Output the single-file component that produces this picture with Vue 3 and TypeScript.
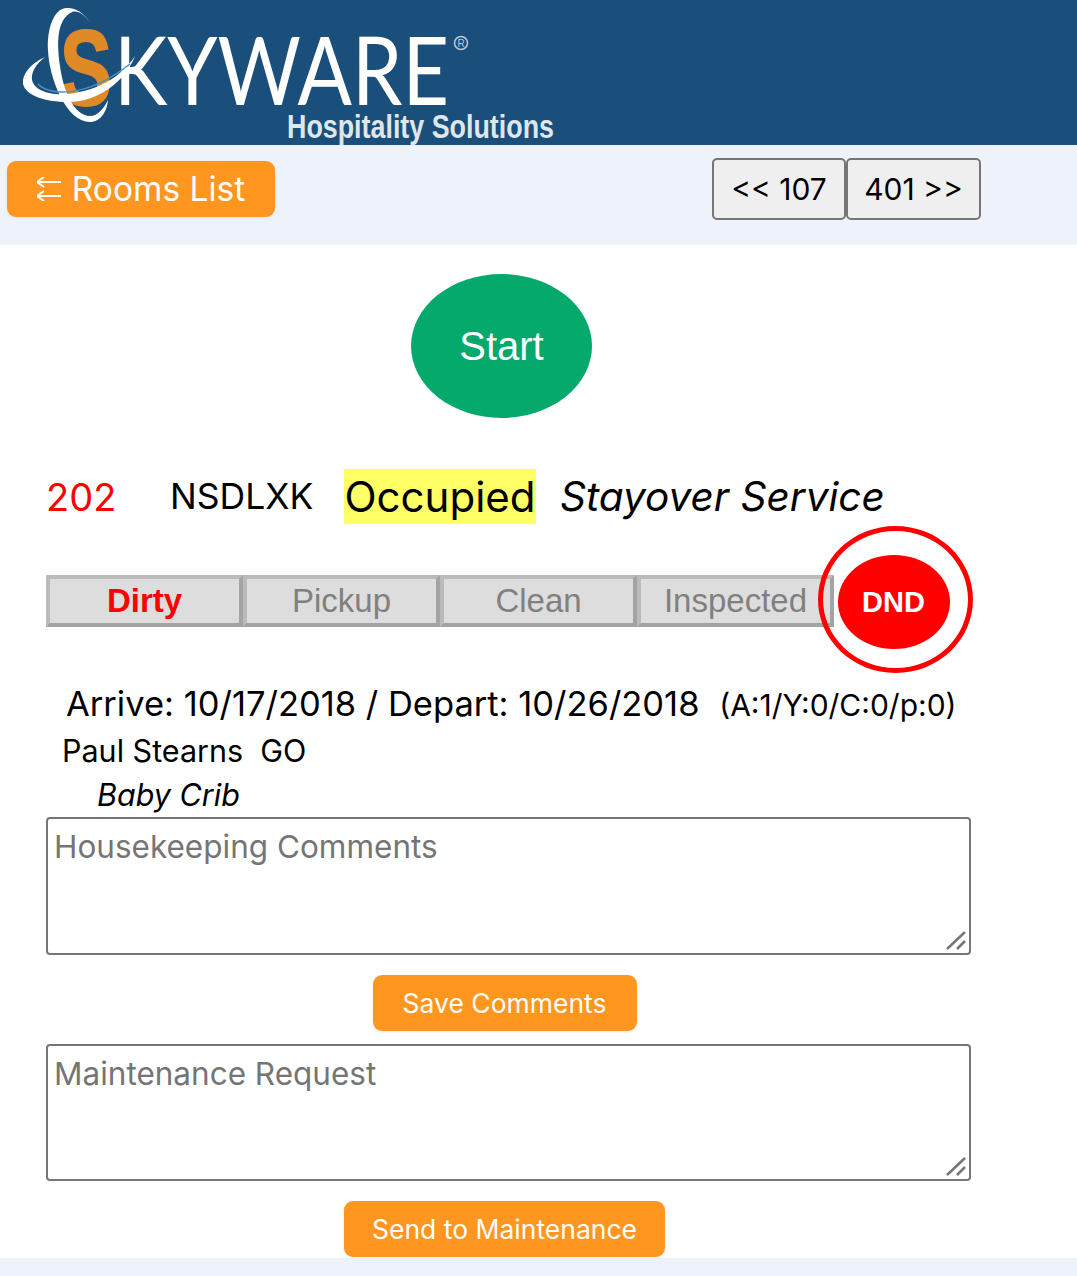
<template>
  <div class="page">
    <header class="brand">
      <!-- logo -->
      <svg class="logo" width="580" height="145" viewBox="0 0 580 145" aria-label="Skyware Hospitality Solutions">
        <text x="60" y="105" class="logo-s" textLength="52" lengthAdjust="spacingAndGlyphs">S</text>
        <text x="114" y="105" class="logo-word" textLength="335" lengthAdjust="spacingAndGlyphs">KYWARE</text>
        <path d="M90 23C84 12 74 7 66 8C54 9 47 28 48 50C49 78 66 122 90 122C100 122 107 112 108 100C104 108 98 116 90 116C74 116 63 90 60 66C57 44 56 20 72 12C78 10 85 15 90 23Z" fill="#fff" />
        <path d="M45 57C30 64 22 74 23 84C26 96 46 102 68 102C96 102 124 84 135 56C122 76 100 90 68 94C50 96 34 90 32 80C31 72 36 64 45 57Z" fill="#fff" />
        <path d="M38 84C48 95 84 100 130 64" fill="none" stroke="#4a90c2" stroke-width="1.5" />
        <circle cx="461" cy="43" r="6.5" fill="none" stroke="#b9c9d8" stroke-width="1.5" />
        <text x="461" y="47" class="logo-r">R</text>
        <text x="287" y="138" class="logo-sub" textLength="267" lengthAdjust="spacingAndGlyphs">Hospitality Solutions</text>
      </svg>
    </header>

    <nav class="toolbar">
      <button class="orange rooms" type="button">
        <svg class="back" width="24" height="24" viewBox="0 0 24 24">
          <path d="M0 5H24M7 0L0 5L7 10M0 19H24M7 14L0 19L7 24" fill="none" stroke="#fff" stroke-width="2" />
        </svg>
        Rooms List
      </button>
      <div class="pager">
        <button type="button">&lt;&lt; 107</button>
        <button type="button">401 &gt;&gt;</button>
      </div>
    </nav>

    <main class="content">
      <div class="start">Start</div>

      <div class="room-line">
        <span class="room-no">202</span>
        <span class="room-code">NSDLXK</span>
        <span class="occupied">Occupied</span>
        <em>Stayover Service</em>
      </div>

      <div class="status-row">
        <div class="status active">Dirty</div>
        <div v-for="s in statuses" :key="s" class="status">{{ s }}</div>
        <div class="dnd"><span>DND</span></div>
      </div>

      <div class="dates">Arrive: 10/17/2018 / Depart: 10/26/2018 <span>(A:1/Y:0/C:0/p:0)</span></div>
      <div class="guest">Paul Stearns&nbsp; GO</div>
      <div class="extra">Baby Crib</div>

      <div class="note">
        <textarea placeholder="Housekeeping Comments"></textarea>
        <svg class="grip" width="20" height="20" viewBox="0 0 20 20"><path d="M1 19L19 2M11 19L19 11" stroke="#767676" stroke-width="2.5" /></svg>
      </div>
      <div class="action"><button class="orange small save" type="button">Save Comments</button></div>

      <div class="note second">
        <textarea placeholder="Maintenance Request"></textarea>
        <svg class="grip" width="20" height="20" viewBox="0 0 20 20"><path d="M1 19L19 2M11 19L19 11" stroke="#767676" stroke-width="2.5" /></svg>
      </div>
      <div class="action"><button class="orange small send" type="button">Send to Maintenance</button></div>
    </main>
  </div>
</template>

<script setup lang="ts">
const statuses: string[] = ['Pickup', 'Clean', 'Inspected']
</script>

<style>
html, body {
  background: #eef2fa;
}
</style>

<style scoped>
.page {
  min-height: 1276px;
  font-family: Inter, "Open Sans", sans-serif;
  color: #000;
}

.brand {
  height: 145px;
  background: #1b4f7b;
  overflow: hidden;
}

.logo {
  display: block;
}

.logo-s {
  font: bold 108px "Liberation Sans", sans-serif;
  fill: #e08a27;
  stroke: #e08a27;
  stroke-width: 2px;
}

.logo-word {
  font: 95px Lato, "Liberation Sans", sans-serif;
  fill: #fff;
}

.logo-r {
  font: 10px "Liberation Sans", sans-serif;
  fill: #b9c9d8;
  text-anchor: middle;
}

.logo-sub {
  font: bold 33px "Liberation Sans", sans-serif;
  fill: #dfe6ec;
}

.toolbar {
  height: 100px;
  box-sizing: border-box;
  display: flex;
  align-items: flex-start;
  padding: 13px 0 0 7px;
}

.orange {
  border: 0;
  border-radius: 9px;
  background: #ff9620;
  color: #fff;
  font-family: Inter, sans-serif;
  box-shadow: 0 1px 3px rgba(0, 0, 0, 0.08);
}

.rooms {
  width: 268px;
  height: 56px;
  margin-top: 3px;
  font-size: 33.5px;
  display: flex;
  align-items: center;
  justify-content: center;
  gap: 11px;
  white-space: nowrap;
}

.pager {
  display: flex;
  margin-left: 437px;
}

.pager button {
  height: 62px;
  box-sizing: border-box;
  border: 2px solid #767676;
  border-radius: 5px;
  background: #efefef;
  color: #000;
  font: 30px Inter, sans-serif;
  padding: 0;
}

.pager button:first-child {
  width: 134px;
}

.pager button:last-child {
  width: 135px;
}

.content {
  background: #fff;
  height: 1013px;
  box-sizing: border-box;
  padding: 29px 0 0 46px;
}

.start {
  width: 181px;
  height: 144px;
  margin-left: 365px;
  border-radius: 50%;
  background: #05a96b;
  color: #fff;
  font: 40px "Liberation Sans", sans-serif;
  display: flex;
  align-items: center;
  justify-content: center;
}

.room-line {
  display: flex;
  align-items: center;
  height: 55px;
  margin-top: 51px;
  font-size: 38px;
  white-space: nowrap;
}

.room-line em {
  font-size: 40.5px;
}

.room-no {
  width: 124px;
  box-sizing: border-box;
  color: #f00;
}

.room-code {
  width: 174px;
  font-size: 35.5px;
}

.occupied {
  width: 192px;
  height: 55px;
  line-height: 55px;
  text-align: center;
  background: #ffff66;
  margin-right: 24px;
  font-size: 42px;
}

.status-row {
  display: flex;
  align-items: center;
  height: 147px;
  margin-top: 2px;
}

.status {
  width: 197px;
  height: 52px;
  margin-top: 2px;
  box-sizing: border-box;
  border: 4px solid;
  border-color: #bbb #a3a3a3 #a3a3a3 #bbb;
  background: #ddd;
  color: #808080;
  font: 33px/44px "Liberation Sans", sans-serif;
  text-align: center;
}

.status.active {
  color: #f00;
  font-weight: bold;
}

.dnd {
  width: 155px;
  height: 147px;
  box-sizing: border-box;
  margin-left: -16px;
  border: 5px solid #f00;
  border-radius: 50%;
  display: flex;
  align-items: center;
  justify-content: center;
  position: relative;
}

.dnd span {
  width: 112px;
  height: 94px;
  margin: 5px 4px 0 0;
  border-radius: 50%;
  background: #f00;
  color: #fff;
  font: bold 29px/94px "Liberation Sans", sans-serif;
  text-align: center;
}

.dates {
  margin: 8px 0 0 20px;
  font-size: 34.5px;
  line-height: 46px;
  white-space: nowrap;
}

.dates span {
  margin-left: 10px;
  font-size: 30px;
}

.guest {
  margin: 1px 0 0 16px;
  font-size: 30.5px;
  line-height: 44px;
}

.extra {
  margin-left: 51px;
  font-size: 30.5px;
  line-height: 44px;
  font-style: italic;
}

.note {
  position: relative;
  width: 925px;
}

textarea {
  display: block;
  width: 100%;
  height: 138px;
  box-sizing: border-box;
  margin: 0;
  padding: 8px 6px;
  border: 2px solid #767676;
  border-radius: 4px;
  background: #fff;
  font: 31.5px Inter, sans-serif;
  resize: none;
}

.note.second textarea {
  height: 137px;
}

.grip {
  position: absolute;
  right: 5px;
  bottom: 5px;
}

.action {
  display: flex;
  justify-content: center;
  width: 917px;
  margin: 20px 0 13px;
}

.small {
  height: 56px;
  font-size: 26.5px;
}

.save {
  width: 264px;
}

.send {
  width: 321px;
}
</style>
